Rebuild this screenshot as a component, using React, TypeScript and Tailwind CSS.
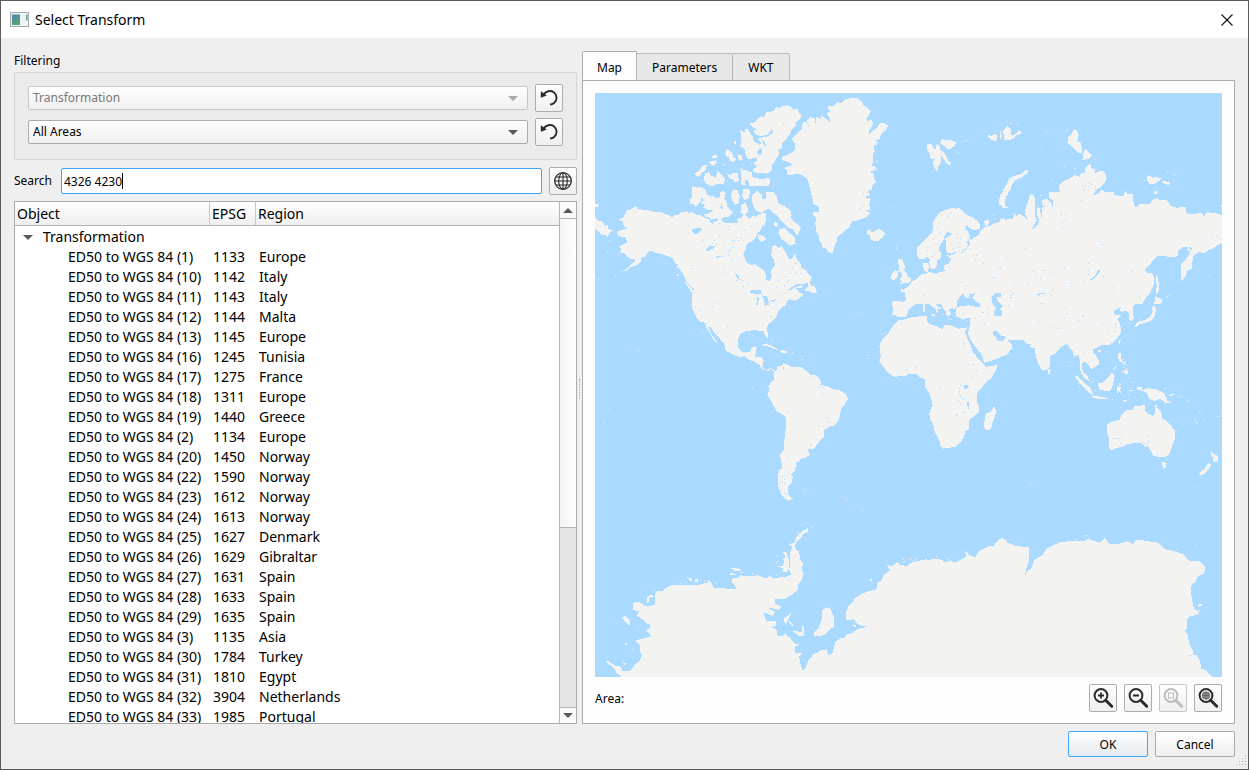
import { useState } from "react";
import type { ReactNode } from "react";

const rows: [string, string, string][] = [
  ["1", "1133", "Europe"],
  ["10", "1142", "Italy"],
  ["11", "1143", "Italy"],
  ["12", "1144", "Malta"],
  ["13", "1145", "Europe"],
  ["16", "1245", "Tunisia"],
  ["17", "1275", "France"],
  ["18", "1311", "Europe"],
  ["19", "1440", "Greece"],
  ["2", "1134", "Europe"],
  ["20", "1450", "Norway"],
  ["22", "1590", "Norway"],
  ["23", "1612", "Norway"],
  ["24", "1613", "Norway"],
  ["25", "1627", "Denmark"],
  ["26", "1629", "Gibraltar"],
  ["27", "1631", "Spain"],
  ["28", "1633", "Spain"],
  ["29", "1635", "Spain"],
  ["3", "1135", "Asia"],
  ["30", "1784", "Turkey"],
  ["31", "1810", "Egypt"],
  ["32", "3904", "Netherlands"],
  ["33", "1985", "Portugal"],
];

// Each region lists its outlines in its own tile coordinates, three units per pixel.
type Region = { at: string; land: string[]; water?: string[]; lakes?: string; islets?: string };

const regions: Region[] = [
  {
    // Alaska, Canada and the Arctic archipelago
    at: "translate(0 0)",
    land: [
      "122,340 128,348 140,350 165,353 182,358 198,357 212,363 222,366 232,374 240,366 252,366 258,358 270,358 275,352 280,360 292,356 298,364 315,366 325,372 342,380 350,390 365,384 378,378 385,388 410,390 430,390 425,378 440,374 445,362 455,368 462,378 470,372 476,364 482,376 486,366 496,364 502,358 514,362 514,380 508,396 500,404 494,416 486,420 484,432 474,444 460,450 452,458 454,468 444,484 450,495 454,508 466,515 480,514 492,522 508,532 512,545 512,558 522,566 530,552 528,532 540,516 536,498 526,486 532,478 532,460 540,456 550,464 560,460 572,478 580,496 590,498 600,482 606,500 614,506 620,525 632,530 640,544 650,552 648,564 630,572 606,572 594,580 566,598 582,594 600,584 622,576 620,584 604,586 614,600 626,604 610,612 594,622 580,618 570,640 290,640 296,620 300,610 298,588 290,582 276,570 270,555 262,540 252,526 244,522 248,514 238,508 234,496 216,488 200,483 182,480 168,472 156,480 152,490 140,492 136,510 126,516 108,522 98,532 78,536 95,528 112,512 124,500 108,498 96,490 90,482 76,478 78,466 72,460 84,454 96,448 92,432 72,430 64,420 78,410 98,408 84,396 84,386 70,380 86,372 94,354 112,346",
      "0,332 12,336 8,342 0,342",
      "0,374 12,384 24,386 30,398 40,396 40,408 54,412 42,420 38,434 30,426 16,424 14,416 4,412 0,404",
      "292,280 304,284 316,282 330,288 336,300 322,312 314,328 302,342 296,334 284,332 286,318 292,312",
      "322,300 334,302 346,312 354,308 362,316 376,312 376,298 386,294 392,302 388,318 396,328 396,342 408,352 414,360 400,372 384,372 376,384 364,376 350,380 340,372 330,372 328,364 344,360 354,352 336,350 324,344 330,336 318,330 326,322 320,312",
      "436,112 448,118 452,106 462,112 466,124 474,130 476,146 490,152 494,166 486,176 490,188 474,196 460,198 452,186 450,168 436,160 440,140",
      "464,92 480,88 488,76 500,70 506,76 514,58 536,54 544,42 556,46 558,38 572,40 576,36 590,42 594,50 608,48 612,62 620,66 614,80 600,90 604,98 590,110 586,122 574,138 562,150 560,164 550,172 552,184 544,196 538,208 530,216 532,232 516,242 500,240 476,238 474,228 486,222 476,210 486,204 482,190 498,184 502,170 490,160 498,150 488,138 500,134 520,130 534,118 530,108 520,124 500,130 480,124 476,112 490,112 474,104",
      "436,228 450,232 472,238 470,250 484,256 504,258 520,254 526,268 520,280 486,280 462,278 460,262 440,258",
      "394,168 404,174 412,180 416,192 424,198 416,208 406,204 400,192 390,186",
      "428,184 438,186 444,200 436,204 430,196",
      "350,188 366,186 368,196 352,196",
      "342,206 362,202 366,210 356,218 346,214",
      "300,240 312,234 322,218 336,216 332,232 320,240 312,252 302,248",
      "330,240 342,238 350,250 364,252 366,234 374,242 390,258 386,272 368,272 352,280 334,272 326,262",
      "396,238 406,248 414,240 428,240 432,262 420,268 412,258 402,256",
      "436,260 450,258 452,276 440,276",
      "414,292 428,290 434,312 432,330 420,336 410,318 408,304",
      "444,288 466,290 462,314 448,322 442,310",
      "440,334 452,330 460,352 452,364 436,360",
      "474,304 486,294 500,304 502,318 512,318 514,296 536,298 544,308 550,330 562,336 574,344 586,352 590,368 588,378 600,388 618,402 612,418 606,428 594,408 580,404 566,390 556,380 546,368 536,360 522,346 500,358 484,354 474,338 470,320",
      "488,366 512,364 514,384 504,402 492,410 484,394",
      "554,408 570,404 580,418 598,430 602,452 586,458 572,448 558,436 550,420",
      "490,424 508,430 514,440 500,446 488,436",
      "538,386 550,392 546,402 536,396",
      "418,144 423,144 423,152 418,152",
      "640,566 648,574 650,580 660,580 666,598 652,600 644,594 630,594 632,586 640,582",
      "246,540 252,548 246,550",
      "270,566 286,580 298,602 290,598 276,578",
    ],
    water: [
      "294,408 310,404 324,408 312,418 300,424 290,416",
      "332,470 346,458 360,460 350,468 336,476",
      "360,492 384,488 364,496",
      "420,540 432,548 434,562 426,556",
      "490,420 512,404 522,388 534,402 536,422 546,434 520,440 510,432",
      "380,330 384,350 376,345",
      "500,140 510,150 516,164 504,152",
    ],
    lakes:
      "280,395 280,420 290,405 320,440 350,450 356,440 372,430 388,455 402,408 405,470 372,390 400,485 412,462 412,440 424,432 436,436 444,440 428,404 430,440 366,530 380,536 410,500 388,520 414,515 440,560 444,580 456,606 460,572 476,572 416,440 380,490 366,490 286,516 292,524 316,624 550,560 560,520 574,550 584,540 592,524 604,510 580,560 568,576 604,536 614,540 544,580 350,390 362,452 400,474 500,396 508,160 564,90 570,86 430,356 400,400 448,410 464,400 350,464 340,470 424,560",
    islets: "36,476 8,558 60,546 48,444 42,442 70,482 396,264 388,216 440,212 468,214 510,454 520,458 522,448 440,224 388,212 320,260",
  },
  {
    // Greenland, Iceland, Svalbard, Scandinavia, British Isles
    at: "translate(555 0)",
    land: [
      "146,38 162,38 172,28 186,30 194,20 214,14 230,16 246,26 250,36 262,44 272,56 266,68 258,76 262,84 274,80 280,90 274,104 266,116 268,122 280,112 290,106 300,90 312,90 324,98 318,110 304,124 298,138 284,142 294,148 290,156 280,158 284,176 278,184 280,208 274,216 288,222 290,230 270,236 282,244 284,262 290,268 278,274 276,290 264,294 270,306 254,312 272,318 268,336 272,350 254,350 270,360 258,372 240,380 224,384 214,386 208,402 194,414 184,422 172,432 170,446 164,460 158,480 146,478 138,466 128,464 126,452 118,442 118,430 110,418 108,408 106,390 108,374 100,366 100,356 116,356 116,344 108,336 100,334 96,310 90,290 86,270 80,256 66,246 50,242 34,246 22,244 22,234 14,224 38,216 30,210 8,202 6,192 30,182 44,172 44,150 34,138 46,126 66,106 68,88 78,86 88,102 80,84 92,72 104,76 106,94 110,70 122,78 122,66 134,74 150,88 150,76 140,62 152,54 144,46",
      "262,410 272,410 274,418 288,414 292,408 304,410 314,422 308,434 294,444 282,444 268,436 270,428 262,422",
      "442,154 456,154 460,166 468,168 470,152 478,156 480,170 494,180 500,192 506,206 514,208 510,216 498,210 490,196 484,188 484,208 474,222 472,236 464,226 458,208 466,200 452,196 448,180 442,170",
      "480,148 488,136 500,144 506,140 520,144 528,148 524,158 512,168 498,166 494,158 484,154",
      "622,126 634,128 648,122 652,136 648,146 632,140",
      "670,120 692,108 692,140 674,142",
      "692,258 682,266 678,284 668,294 664,310 656,320 656,334 672,344 684,346 672,336 670,318 682,306 692,282",
      "692,376 680,380 664,382 652,390 640,392 634,398 614,402 600,416 596,426 580,434 574,442 566,434 570,456 560,466 548,480 532,476 520,484 508,488 498,486 514,498 506,512 492,516 494,534 480,538 466,542 446,536 438,542 420,546 410,558 396,566 386,580 370,590 362,586 362,596 374,598 380,614 378,632 692,632",
      "516,344 528,348 538,344 546,354 560,366 580,374 598,390 600,406 586,412 570,406 560,396 556,406 564,416 570,430 560,448 564,458 548,478 530,476 514,482 500,478 498,456 496,436 508,430 518,420 502,418 492,432 490,444 480,456 476,470 484,482 482,496 472,502 472,516 464,528 452,528 446,508 452,500 442,492 432,498 418,500 412,488 412,462 424,452 438,438 444,430 454,420 460,408 458,388 470,370 484,356 500,350",
      "428,512 442,508 448,520 442,538 432,532",
      "352,500 366,498 372,512 376,524 372,532 380,540 384,552 394,556 390,568 374,570 356,574 366,566 358,558 368,550 366,540 356,532 356,516",
      "336,540 346,532 356,534 352,552 342,562 332,558",
      "612,384 626,380 626,392 618,402",
      "340,626 360,624 378,632 336,632",
    ],
    lakes:
      "458,438 458,452 470,404 476,386 482,364 500,370 510,360 546,380 530,420 530,436 552,410 534,450 530,458 550,400 536,462 546,468 512,452 480,416 448,460 442,470 452,488 462,484 580,484 584,498 610,510 654,524 636,552 626,568 544,568 556,580 608,592 642,554 678,520 560,408 540,436 520,466 568,466 564,610 580,600 248,300 260,296 262,316 240,346 246,340 100,44 588,486 552,608",
    islets: "340,342 348,460 348,466 378,480 532,180 536,176 550,144 558,142 638,366 642,374 286,200 290,208 648,112 600,430",
  },
  {
    // Russia and the Siberian Arctic
    at: "translate(1215 0)",
    land: [
      "0,380 10,376 16,382 40,376 42,366 30,354 50,368 58,362 70,370 84,382 74,362 78,340 86,320 90,304 100,306 104,314 104,366 110,382 98,404 92,410 104,406 118,388 112,366 112,344 118,342 124,372 132,374 130,390 124,344 136,342 124,334 128,320 144,318 154,330 160,350 160,322 148,316 148,298 180,296 176,280 190,264 204,260 224,246 240,252 242,242 256,238 254,226 270,212 274,224 284,228 284,240 300,234 314,236 320,256 312,272 296,286 284,298 278,308 296,302 306,288 314,298 340,296 344,306 370,310 376,292 384,304 398,302 402,340 414,344 416,332 450,334 456,320 470,316 482,322 500,322 516,340 530,344 558,342 560,362 588,362 606,360 612,372 620,358 646,360 666,366 668,450 652,456 640,466 624,472 612,482 598,476 580,488 576,512 576,526 562,534 556,552 544,566 542,514 556,502 564,488 576,468 570,460 560,470 566,476 574,470 562,464 550,462 540,472 534,490 510,492 486,488 470,490 456,506 446,520 434,532 444,540 458,542 464,560 460,580 448,598 436,612 428,632 0,632",
      "82,228 84,240 64,254 46,262 36,274 32,290 20,300 16,320 16,338 26,346 10,344 0,330 0,304 8,302 8,290 20,276 28,256 46,248 64,242",
      "222,108 230,112 236,126 232,144 244,152 246,180 236,180 224,170 214,158 202,150 206,130 214,124",
      "256,166 264,176 276,186 268,196 246,202 250,190 250,180",
      "442,250 450,246 456,254 468,252 482,256 478,264 464,272 448,272 442,262",
      "486,264 500,266 512,270 504,276 490,270",
      "460,296 468,292 474,302 462,302",
      "468,544 474,556 478,582 474,602 468,600 470,580",
      "466,610 486,620 484,632 464,632",
      "8,114 22,98 30,108 20,122 8,118",
      "22,132 44,124 60,112 66,122 50,126 42,136 28,140",
      "0,110 6,130 0,142",
      "660,338 668,336 668,344",
    ],
    water: [
      "268,562 282,552 296,530 300,534 292,548 276,562",
      "546,462 564,462 550,486 538,490 532,480",
      "108,606 122,600 144,598 144,602 122,604 112,612",
      "30,606 40,604 36,620",
    ],
    lakes:
      "246,280 250,286 256,276 264,280 266,270 274,274 284,280 286,288 250,290 242,320 182,356 184,362 194,362 196,378 186,380 182,386 186,404 300,444 306,452 18,492 100,534 108,544 128,532 136,532 158,536 120,554 192,524 264,510 256,522 264,530 264,542 248,564 210,570 210,578 84,570 42,566 338,580 340,590 390,540 396,534 416,612 158,588 154,602 150,606 534,374 566,372 310,548 636,432 648,430 656,434 74,464 0,522 566,482",
    islets: "138,118 124,160 152,260 192,220 226,226 502,234 522,246 432,260 434,286 590,528 626,548 496,612 506,606 30,90 52,94 198,112 282,198 38,148 120,306",
  },
  {
    // United States, Central and South America
    at: "translate(0 591)",
    land: [
      "292,0 292,56 300,72 306,86 314,94 328,98 334,112 342,124 350,140 356,152 368,160 364,152 354,140 346,124 340,112 348,112 356,126 366,136 376,148 388,162 392,182 408,190 424,198 436,202 448,198 460,208 480,216 492,224 498,232 506,240 520,242 530,236 538,244 538,268 528,278 520,288 522,302 516,314 528,332 536,348 546,364 558,370 572,382 572,420 568,450 566,478 556,494 558,530 552,545 548,560 548,584 554,600 558,614 572,626 580,632 596,626 584,620 578,606 580,590 590,580 590,566 596,564 588,552 600,542 602,530 608,528 600,518 612,516 616,506 632,504 644,494 638,478 656,478 666,464 680,446 688,440 688,420 704,410 718,406 728,396 734,380 738,356 748,346 758,328 756,316 738,302 718,298 700,290 676,284 680,276 664,256 644,254 630,240 618,230 590,230 578,224 564,220 562,228 548,228 544,242 534,244 528,234 514,242 502,232 506,212 500,202 480,200 484,176 486,170 470,172 466,186 450,188 438,184 430,172 430,144 436,132 452,124 480,120 506,124 512,140 520,148 520,136 516,120 518,104 530,96 544,80 548,66 560,54 570,44 576,32 600,20 600,0",
      "590,28 598,20 612,18 620,10 626,16 610,26 598,32",
      "630,0 664,0 664,8 650,4 636,4",
      "502,164 516,162 532,168 542,174 552,180 538,178 524,170 504,168",
      "552,186 562,180 580,186 566,190",
      "534,188 542,188 536,192",
    ],
    water: [
      "462,10 470,0 498,0 500,12 486,14 472,8",
      "486,20 494,20 488,44 484,44",
      "500,16 516,18 522,36 510,48 508,34",
      "512,46 526,38 522,46",
      "526,32 542,28 536,36",
      "552,520 560,520 560,536 552,536",
      "562,228 568,232 566,238",
    ],
    lakes:
      "450,12 318,34 358,40 352,48 300,50 314,58 312,64 396,108 342,92 332,98 366,126 476,28 558,14 570,10 528,78 654,258 668,292 684,290 680,308 576,364 580,370 690,382 700,384 700,396 672,404 684,408 654,416 648,464 578,500 566,568 562,558 580,548 566,580 556,572 556,600 566,610 570,618 520,296 552,580 534,0 294,10 562,576 676,288 574,612",
    islets: "788,66 126,178 128,182 42,356 24,396 462,286 472,290 320,126 618,198 622,206 592,186 532,150 624,598 628,602 634,598 748,622 752,626",
  },
  {
    // Europe, Africa and the Middle East
    at: "translate(765 591)",
    land: [
      "164,0 166,20 172,32 158,36 130,34 126,42 130,58 126,74 136,76 142,82 154,80 168,80 172,72 174,60 186,50 196,44 196,36 208,32 222,28 230,36 240,44 248,50 258,58 258,70 264,66 262,56 274,56 262,48 252,36 240,26 240,18 250,20 256,28 268,38 276,46 280,56 288,66 290,76 296,82 298,74 304,74 300,66 296,58 306,54 312,60 316,54 322,50 322,38 330,20 342,10 356,0",
      "356,0 600,0 600,150 524,150 510,150 474,150 468,140 454,138 438,122 428,124 430,134 440,146 444,154 458,154 470,140 474,152 488,164 484,178 470,194 440,206 420,214 402,218 396,196 380,176 362,150 354,132 358,110 362,84 346,84 342,90 330,84 318,80 316,66 320,56 316,54 334,48 356,46 376,50 392,50 390,40 372,24 360,10",
      "520,148 600,148 600,230 592,236 580,242 570,232 562,212 556,190 556,166 552,174 540,172 540,162 528,160",
      "146,90 158,90 174,84 196,80 230,78 232,86 230,96 244,104 264,110 278,118 282,106 302,106 326,116 352,112 344,126 350,140 360,162 368,184 382,204 400,222 410,230 428,228 442,222 440,236 432,250 424,264 406,280 390,298 380,312 380,334 388,350 386,366 370,380 358,392 358,416 346,424 342,442 332,456 316,470 296,474 278,476 270,468 270,456 262,440 254,426 250,404 240,386 238,370 244,352 248,346 244,326 236,306 224,292 226,268 208,262 200,252 178,252 166,258 132,260 112,246 98,228 88,214 92,198 88,168 98,146 114,130 126,112 138,96",
      "432,348 438,358 436,376 430,392 422,418 410,422 402,412 404,386 408,370 422,366",
      "220,44 224,40 224,66 220,66",
      "240,72 256,72 254,80 242,74",
      "592,236 600,236 600,254 594,250",
    ],
    water: [
      "322,46 320,36 330,18 340,10 344,22 354,26 362,20 370,26 378,34 390,40 392,50 368,48 346,44 330,50",
      "424,22 436,10 452,8 452,20 438,22 446,38 458,46 456,56 450,54 456,66 456,78 434,78 432,66 438,54 428,42",
      "342,284 350,284 356,290 348,298 342,296",
      "352,336 356,336 356,358 353,358",
      "358,12 374,10 370,20 360,22",
    ],
    lakes:
      "218,14 396,66 400,66 412,52 412,68 376,84 402,102 250,216 340,164 342,160 198,232 168,238 144,246 174,250 354,222 370,222 378,240 364,262 364,266 346,276 330,286 328,294 328,304 328,308 330,318 334,322 336,328 342,324 324,330 330,342 336,366 342,366 322,372 318,376 270,294 474,44 480,22 480,16 486,12 484,20 490,10 562,20 560,12 568,10 574,10 580,10 592,12 576,40 564,92 438,148 348,130 94,212 92,190 340,72 354,90 396,0",
    islets: "24,66 54,196 52,204 102,126 94,132 464,396 190,60 298,88 304,88 346,92 350,90 306,52 278,72 294,84",
  },
  {
    // Southern Asia, Indonesia, Australia and New Zealand
    at: "translate(1305 591)",
    land: [
      "0,0 364,0 358,12 344,28 334,40 318,38 310,48 308,64 312,86 304,94 296,88 296,70 288,62 274,66 264,54 268,64 250,68 258,76 274,74 262,88 270,102 274,122 268,136 254,154 236,166 214,166 190,178 188,188 200,200 206,210 206,224 194,232 184,238 178,228 168,218 158,214 156,236 160,248 172,256 178,274 166,268 154,250 150,238 150,214 146,196 132,200 128,184 118,172 110,162 96,170 78,188 58,200 52,214 52,230 40,242 32,236 20,208 14,174 0,172",
      "54,236 62,240 60,252 54,250",
      "132,256 146,260 158,274 170,284 182,296 190,316 178,310 162,292 150,280",
      "186,318 212,320 232,324 236,328 206,326 190,324",
      "204,280 218,280 234,264 246,246 254,258 250,278 244,300 230,304 208,298",
      "262,290 268,284 276,282 264,290 274,292 270,300 276,314 266,302 260,312",
      "264,188 272,188 272,210 286,218 290,228 278,218 266,212",
      "276,244 290,238 296,250 288,252",
      "260,224 256,236 248,240",
      "264,152 272,150 268,164",
      "206,180 214,182 210,188 204,186",
      "314,110 318,100 328,94 346,90 360,80 368,66 366,52 374,46 378,60 372,84 360,94 340,100 326,104 320,112",
      "366,40 376,34 374,22 392,32 386,42",
      "378,0 384,10 378,12",
      "320,290 336,290 336,300 354,294 380,298 400,308 408,320 412,332 424,338 406,338 390,326 374,334 358,326 350,308 334,302 324,300",
      "420,314 434,308 430,316 416,318",
      "294,300 316,300 300,304",
      "246,328 258,330 252,332",
      "276,330 296,332 284,336",
      "378,342 384,356 392,362 398,386 410,392 424,408 436,424 436,444 428,464 420,486 414,498 396,502 370,498 360,478 352,468 346,472 334,460 316,458 290,464 272,472 258,474 246,480 238,474 238,450 230,424 230,404 244,396 268,390 274,376 288,360 308,360 314,348 344,346 344,362 356,372 368,378 374,370 376,346",
      "394,516 410,518 408,532 400,536",
      "544,482 548,490 556,494 566,500 562,514 548,518 550,504 544,494",
      "534,520 544,522 538,534 526,550 514,556 506,550 522,538",
      "496,394 504,402 500,400",
      "468,330 480,334 474,336",
    ],
    water: ["22,12 36,8 50,10 30,12 24,20", "350,474 356,456 352,484 346,478", "258,58 272,52 270,66 252,66"],
    lakes:
      "34,38 38,38 24,92 106,52 108,70 102,80 144,90 156,74 158,78 216,102 230,120 254,110 256,122 254,102 70,110 82,114 90,114 108,124 108,162 158,188 176,216 328,20 250,0 0,162 276,408 248,444 258,444 266,444 270,458 274,440 340,456 346,458 350,436 352,442 354,450 58,10 62,14",
    islets: "404,22 412,18 418,14 118,228 120,212 144,280 148,288 190,266 196,300 268,278 284,278 296,260 306,276 294,312 336,316 402,294 420,298 444,318 452,322 476,326 508,362 514,370 520,386 562,378 566,378 574,370 388,508 412,508 514,560 502,590 0,580 296,98 330,84 276,206 284,214 288,234 182,274 278,222 280,230 188,276",
  },
  {
    // Antarctica, western half
    at: "translate(0 1251)",
    land: [
      "82,502 66,490 56,474 32,454 42,454 56,466 76,470 82,482 106,482 120,464 134,452 140,438 134,418 134,404 120,392 158,382 168,378 154,362 168,350 150,334 134,322 124,316 132,304 114,300 114,278 134,276 150,288 180,286 180,250 188,242 202,244 208,236 230,226 268,226 312,224 348,216 358,234 380,234 418,238 424,234 410,214 410,206 430,204 434,196 464,198 490,196 516,206 524,196 534,206 556,202 572,202 590,192 582,182 586,160 586,128 592,108 582,104 600,96 604,82 610,74 626,60 640,54 640,66 626,70 616,86 604,96 598,108 606,124 612,124 616,150 624,162 620,178 626,190 618,214 608,226 608,240 592,252 572,266 540,266 540,280 560,290 552,300 518,292 540,306 534,318 504,306 514,332 542,334 542,348 526,352 544,358 548,376 558,380 570,372 586,384 598,400 614,404 600,410 600,430 622,430 612,440 616,460 622,480 630,478 640,452 656,432 680,420 696,418 700,436 712,430 720,398 736,384 748,384 756,372 772,370 786,358 818,350 796,346 786,340 776,328 752,330 752,310 760,290 784,262 812,246 844,238 846,220 862,208 864,196 884,182 876,164 888,170 908,156 914,166 940,168 962,154 962,502",
      "82,322 92,318 106,334 106,348 94,340",
      "84,396 100,402 94,404",
      "84,456 94,460 88,466",
      "126,346 134,352 130,352",
      "404,188 426,194 404,194",
      "406,174 438,176 440,184 418,182",
      "436,186 448,186 440,190",
      "276,202 290,206 292,214 282,210",
      "298,206 310,206 308,218 300,214",
      "340,210 346,214 344,224 340,222",
      "564,126 574,128 582,150 582,176 574,186 560,184 566,174 546,170 562,168 568,154 562,148 572,142",
      "568,324 590,308 578,332 572,342 566,334",
      "580,332 592,340 596,352 588,346",
      "592,362 620,366 620,348 628,350 628,378 610,378",
      "694,292 706,296 716,320 716,350 704,360 686,376 658,380 658,366 670,354 680,330 680,302",
      "156,262 170,254 178,258 168,270 156,280",
      "824,210 832,204 832,216",
      "770,342 784,346 780,352",
    ],
    water: ["164,262 176,262 176,268 162,276", "158,280 174,276 160,286"],
    islets: "270,216 254,220 178,240 184,246 546,136 542,156 550,152 390,192 462,184 472,188 476,192 316,210 326,210 110,414 114,420 606,66 610,70 622,44 634,38 648,52 926,154 954,150 946,146 800,0 548,190 544,196 586,96 360,220",
  },
  {
    // Antarctica, eastern half
    at: "translate(915 1281)",
    land: [
      "0,134 20,138 34,128 56,122 78,118 90,122 94,116 108,116 128,120 130,126 150,124 166,128 184,118 198,110 196,94 208,106 226,112 236,94 250,86 268,78 280,80 292,62 304,54 316,58 322,68 350,78 388,82 386,112 386,124 378,150 374,166 382,152 394,146 402,120 426,106 440,86 478,68 506,64 550,64 564,56 580,62 600,68 614,54 628,72 654,72 680,64 700,72 706,60 722,60 774,68 796,88 826,94 852,104 866,122 880,122 900,124 916,140 912,160 890,172 888,188 876,192 872,206 876,240 882,266 898,276 892,284 870,290 862,298 862,326 856,332 864,346 866,366 878,390 880,404 890,406 900,422 904,446 916,450 940,472 0,472",
      "894,254 908,252 906,258 894,260",
    ],
    lakes: "20,134 868,404 874,406 870,288 378,118 376,162 884,186 826,92",
    islets: "8,118 10,126 30,114 40,120 48,118 108,108 140,118 152,120 162,114 472,66 528,58 550,50 554,46 560,46 564,50 884,76 828,88 896,270 894,282 280,70",
  },
];

const toPath = (outline: string) => `M${outline}z`;
const toDots = (points = "") =>
  points
    .split(" ")
    .filter(Boolean)
    .map((p) => `M${p}h3v3h-3z`)
    .join("");

function WorldMap() {
  return (
    <svg
      viewBox="0 0 1881 1752"
      preserveAspectRatio="xMidYMid slice"
      shapeRendering="crispEdges"
      role="img"
      aria-label="World map"
      className="block min-h-0 w-full flex-1 bg-[#aadaff]"
    >
      {regions.map((r) => (
        <g key={r.at} transform={r.at}>
          <path fill="#f3f3f1" d={r.land.map(toPath).join("")} fillRule="nonzero" />
          <path fill="#aadaff" d={(r.water ?? []).map(toPath).join("") + toDots(r.lakes)} />
          <path fill="#f3f3f1" d={toDots(r.islets)} />
        </g>
      ))}
    </svg>
  );
}

function ToolButton({ label, disabled, children }: { label: string; disabled?: boolean; children: ReactNode }) {
  return (
    <button
      type="button"
      aria-label={label}
      disabled={disabled}
      className="flex h-7 w-7 shrink-0 items-center justify-center rounded-[2px] border border-[#acacac] bg-linear-to-b from-white to-[#efefef] text-[#2b2b2b] disabled:border-[#c6c6c6] disabled:text-[#bcbcbc]"
    >
      {children}
    </button>
  );
}

function ResetIcon() {
  return (
    <svg viewBox="0 0 20 20" className="h-5 w-5" fill="none" aria-hidden="true">
      <path d="M4.5 6.6C7 3 11.6 1.9 14.8 4.3c3.600 2.700 3.700 7.900.3 10.700-1.200 1-2.500 1.400-4 1.500" stroke="currentColor" strokeWidth="1.900" />
      <path d="M1.800 3.200v6.500l6-2.200z" fill="currentColor" />
    </svg>
  );
}

function GlobeIcon() {
  return (
    <svg viewBox="0 0 20 20" className="h-5 w-5" fill="none" stroke="currentColor" strokeWidth="1.100" aria-hidden="true">
      <circle cx="10" cy="10" r="8.300" strokeWidth="1.300" />
      <ellipse cx="10" cy="10" rx="4.300" ry="8.300" />
      <path d="M10 1.700v16.600M1.700 10h16.600M3 6h14M3 14h14" />
    </svg>
  );
}

function ZoomIcon({ kind }: { kind: "in" | "out" | "area" | "world" }) {
  return (
    <svg viewBox="0 0 22 22" className="h-[22px] w-[22px] shrink-0" fill="none" stroke="currentColor" aria-hidden="true">
      <circle cx="9" cy="8.500" r="6.400" strokeWidth="2" />
      <path d="M13.700 13.200l6 6" strokeWidth="3" strokeLinecap="round" />
      {kind === "in" && <path d="M9 5.500v6M6 8.500h6" strokeWidth="1.800" />}
      {kind === "out" && <path d="M6 8.500h6" strokeWidth="2" />}
      {kind === "area" && <rect x="6.500" y="6" width="5" height="5" strokeWidth="1" />}
      {kind === "world" && (
        <>
          <circle cx="9" cy="8.500" r="3.700" fill="#8a8a8a" stroke="#6a6a6a" strokeWidth="1" />
          <path d="M9 5v7M5.500 8.500h7" stroke="#6a6a6a" strokeWidth="1" />
        </>
      )}
    </svg>
  );
}

function Arrow({ up, className = "text-[#5a5a5a]" }: { up?: boolean; className?: string }) {
  return (
    <svg viewBox="0 0 10 5" className={`h-[5px] w-2.5 ${className}`} aria-hidden="true">
      <path d={up ? "M0 5h10L5 0z" : "M0 0h10L5 5z"} fill="currentColor" />
    </svg>
  );
}

function FilterRow({ label, value, disabled }: { label: string; value: string; disabled?: boolean }) {
  return (
    <div className="flex items-center gap-[7px]">
      <div className="relative flex-1">
        <select
          aria-label={label}
          disabled={disabled}
          className="block h-6 w-full appearance-none rounded-[2px] border border-[#acacac] bg-linear-to-b from-white to-[#efefef] pl-1 text-black disabled:border-[#c6c6c6] disabled:text-[#787878] disabled:opacity-100"
        >
          <option>{value}</option>
        </select>
        <span className="pointer-events-none absolute inset-y-0 right-2.5 flex items-center">
          <Arrow className={disabled ? "text-[#aaaaaa]" : "text-[#5a5a5a]"} />
        </span>
      </div>
      <ToolButton label={`Reset ${label}`}>
        <ResetIcon />
      </ToolButton>
    </div>
  );
}

function TransformTree() {
  return (
    <div className="flex min-h-0 flex-1 border border-[#acacac] bg-white">
      <div className="min-w-0 flex-1 overflow-hidden text-sm leading-5">
        <table className="w-full table-fixed border-separate border-spacing-0">
          <colgroup>
            <col className="w-[195px]" />
            <col className="w-[46px]" />
            <col />
          </colgroup>
          <thead>
            <tr className="h-6 bg-linear-to-b from-white to-[#efefef] text-left">
              <th className="border-r border-b border-r-[#c8c8c8] border-b-[#b4b4b4] p-0 pl-0.5 font-normal">Object</th>
              <th className="border-r border-b border-r-[#c8c8c8] border-b-[#b4b4b4] p-0 pl-0.5 font-normal">EPSG</th>
              <th className="border-b border-[#b4b4b4] p-0 pl-0.5 font-normal">Region</th>
            </tr>
          </thead>
          <tbody>
            <tr>
              <td className="p-0 pt-px" colSpan={3}>
                <button type="button" aria-expanded="true" className="flex items-center gap-2.5 pl-2">
                  <Arrow />
                  Transformation
                </button>
              </td>
            </tr>
            {rows.map(([n, code, region]) => (
              <tr key={n} className="h-5 whitespace-nowrap">
                <td className="p-0 pl-[53px]">ED50 to WGS 84 ({n})</td>
                <td className="p-0 pl-[3px]">{code}</td>
                <td className="p-0 pl-[3px]">{region}</td>
              </tr>
            ))}
          </tbody>
        </table>
      </div>
      <div className="flex w-[17px] shrink-0 flex-col border-l border-[#b4b4b4] bg-[#e6e6e6]">
        <button type="button" aria-label="Scroll up" className="flex h-4 items-center justify-center bg-[#fafafa]">
          <Arrow up />
        </button>
        <div className="flex-[308] border-y border-[#b4b4b4] bg-linear-to-r from-[#f2f2f2] to-white" />
        <div className="flex-[179]" />
        <button type="button" aria-label="Scroll down" className="flex h-4 items-center justify-center border-t border-[#b4b4b4] bg-[#fafafa]">
          <Arrow />
        </button>
      </div>
    </div>
  );
}

const tabs = ["Map", "Parameters", "WKT"];

export default function App() {
  const [query, setQuery] = useState("4326 4230");
  return (
    <div className="flex h-screen min-h-[480px] flex-col border border-[#5c5c5c] bg-[#efefef] font-['Noto_Sans',sans-serif] text-xs text-black">
      <header className="flex h-[37px] shrink-0 items-center bg-white pl-[9px]">
        <svg viewBox="0 0 19 16" className="h-4 w-[19px]" aria-hidden="true">
          <defs>
            <linearGradient id="app" x1="0" y1="0" x2="0.500" y2="1">
              <stop offset="0" stopColor="#4f7fa8" />
              <stop offset="1" stopColor="#53a878" />
            </linearGradient>
          </defs>
          <rect x=".5" y=".5" width="18" height="14" fill="#f0f3f4" stroke="#a3a9ad" />
          <rect x="2" y="2.500" width="8" height="10.500" fill="url(#app)" />
          <rect x="16" y="2.500" width="1.500" height="6" fill="#5fa58e" />
        </svg>
        <h1 className="ml-1.5 flex-1 text-sm">Select Transform</h1>
        <button type="button" aria-label="Close" className="flex h-full w-[42px] items-center justify-center">
          <svg viewBox="0 0 12 12" className="h-3 w-3" stroke="#111" strokeWidth="1.100" aria-hidden="true">
            <path d="M.5.5l11 11M11.500.5l-11 11" />
          </svg>
        </button>
      </header>

      <main className="flex min-h-0 flex-1 px-[13px] pt-[15px]">
        <section className="flex min-w-0 flex-[563] flex-col">
          <h2 className="leading-4">Filtering</h2>
          <div className="mt-[3px] flex flex-col gap-1.5 rounded-[2px] border border-[#d5d5d5] bg-[#ebebeb] px-[13px] pt-[11px] pb-[13px]">
            <FilterRow label="Type" value="Transformation" disabled />
            <FilterRow label="Area" value="All Areas" />
          </div>
          <div className="mt-[7px] mb-1.5 flex items-center">
            <label htmlFor="search" className="w-[47px]">
              Search
            </label>
            <div className="relative flex-1">
              <input
                id="search"
                value={query}
                onChange={(e) => setQuery(e.target.value)}
                className="block h-[26px] w-full rounded-[2px] border border-[#3da5f4] bg-white px-0.5 outline-none"
              />
              <span className="pointer-events-none absolute inset-y-[5px] left-[3px] border-r border-black text-transparent" aria-hidden="true">
                <span className="invisible">{query}</span>
              </span>
            </div>
            <span className="ml-[7px]">
              <ToolButton label="Show on map">
                <GlobeIcon />
              </ToolButton>
            </span>
          </div>
          <TransformTree />
        </section>

        <div className="flex w-[5px] shrink-0 items-center justify-center">
          <span className="h-5 border-l border-dotted border-[#a8a8a8]" />
        </div>

        <section className="-mt-0.5 flex min-w-0 flex-[653] flex-col">
          <div role="tablist" className="flex items-end">
            {tabs.map((t, i) => (
              <button
                key={t}
                type="button"
                role="tab"
                aria-selected={i === 0}
                className={
                  i === 0
                    ? "-mb-px h-[30px] rounded-t-[2px] border border-b-0 border-[#acacac] bg-[#fdfdfd] px-3.5 pt-0.5"
                    : "-mb-px -ml-px h-7 rounded-t-[2px] border border-[#b8b8b8] border-b-[#acacac] bg-[#e8e8e8] px-[15px] pt-0.5"
                }
              >
                {t}
              </button>
            ))}
          </div>
          <div role="tabpanel" className="flex min-h-0 flex-1 flex-col border border-[#acacac] bg-[#fdfdfd] px-3 pt-3">
            <WorldMap />
            <div className="flex shrink-0 items-center gap-[7px] pt-[7px] pb-[11px]">
              <span className="flex-1 pt-0.5">Area:</span>
              <ToolButton label="Zoom in">
                <ZoomIcon kind="in" />
              </ToolButton>
              <ToolButton label="Zoom out">
                <ZoomIcon kind="out" />
              </ToolButton>
              <ToolButton label="Zoom to area" disabled>
                <ZoomIcon kind="area" />
              </ToolButton>
              <ToolButton label="Zoom to world">
                <ZoomIcon kind="world" />
              </ToolButton>
            </div>
          </div>
        </section>
      </main>

      <footer className="relative flex shrink-0 justify-end gap-[7px] px-[13px] pt-[7px] pb-3">
        <button type="button" className="h-[26px] w-20 rounded-[2px] border border-[#3da5f4] bg-linear-to-b from-white to-[#e4ebf1] pt-px">
          OK
        </button>
        <button type="button" className="h-[26px] w-20 rounded-[2px] border border-[#acacac] bg-linear-to-b from-white to-[#efefef] pt-px">
          Cancel
        </button>
        <svg viewBox="0 0 12 12" className="absolute right-0 bottom-0.5 h-3 w-3" fill="#b5b5b5" aria-hidden="true">
          <path d="M9 0h1v1h-1zM6 3h1v1h-1zM9 3h1v1h-1zM3 6h1v1h-1zM6 6h1v1h-1zM9 6h1v1h-1zM0 9h1v1h-1zM3 9h1v1h-1zM6 9h1v1h-1zM9 9h1v1h-1z" />
        </svg>
      </footer>
    </div>
  );
}
